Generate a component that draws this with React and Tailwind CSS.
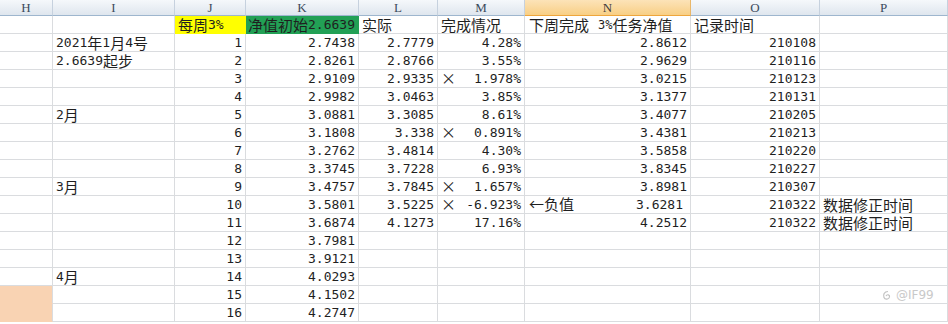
import React from "react";

const cols =
  "grid grid-cols-[53px_122px_71px_113px_79px_87px_166px_129px_128px]";
const letters = ["H", "I", "J", "K", "L", "M", "N", "O", "P"];

// rows: [I, J, K, L, M, N, O, P, markX, nNote, peach]
const rows = [
  ["2021年1月4号", "1", "2.7438", "2.7779", "4.28%", "2.8612", "210108"],
  ["2.6639起步", "2", "2.8261", "2.8766", "3.55%", "2.9629", "210116"],
  ["", "3", "2.9109", "2.9335", "1.978%", "3.0215", "210123", "", true],
  ["", "4", "2.9982", "3.0463", "3.85%", "3.1377", "210131"],
  ["2月", "5", "3.0881", "3.3085", "8.61%", "3.4077", "210205"],
  ["", "6", "3.1808", "3.338", "0.891%", "3.4381", "210213", "", true],
  ["", "7", "3.2762", "3.4814", "4.30%", "3.5858", "210220"],
  ["", "8", "3.3745", "3.7228", "6.93%", "3.8345", "210227"],
  ["3月", "9", "3.4757", "3.7845", "1.657%", "3.8981", "210307", "", true],
  ["", "10", "3.5801", "3.5225", "-6.923%", "3.6281", "210322", "数据修正时间", true, "←负值"],
  ["", "11", "3.6874", "4.1273", "17.16%", "4.2512", "210322", "数据修正时间"],
  ["", "12", "3.7981"],
  ["", "13", "3.9121"],
  ["4月", "14", "4.0293"],
  ["", "15", "4.1502", "", "", "", "", "", false, "", true],
  ["", "16", "4.2747", "", "", "", "", "", false, "", true],
];

const cjk = /([\u3000-\u9fff\uff00-\uffef×←]+)/;

// CJK runs get a wider face, the rest stays in the mono face
function T({ s }) {
  if (!s) return null;
  return s.split(cjk).map((p, i) =>
    cjk.test(p) ? (
      <span
        key={i}
        className="font-['Noto_Sans_CJK_SC',sans-serif] text-[15px] leading-[18px]"
      >
        {p}
      </span>
    ) : (
      <span key={i} className="whitespace-pre">
        {p}
      </span>
    )
  );
}

const cell =
  "h-[18px] leading-[18px] border-r border-b border-[#dadcdf] flex items-center overflow-hidden whitespace-nowrap";
const left = `${cell} pl-[3px]`;
const right = `${cell} justify-end pr-[3px]`;

function Row({ r }) {
  const [i, j, k, l, m, n, o, p, x, note, peach] = r;
  return (
    <div className={cols}>
      <div
        className={
          peach
            ? "h-[18px] bg-[#f9d3b3] border-r border-b border-r-[#dadcdf] border-b-[#f9d3b3]"
            : cell
        }
      />
      <div className={left}>
        <T s={i} />
      </div>
      <div className={right}>{j}</div>
      <div className={right}>{k}</div>
      <div className={right}>{l}</div>
      <div className={`${cell} justify-between pl-[3px] pr-[3px]`}>
        <span>{x ? <T s="×" /> : null}</span>
        <span>{m}</span>
      </div>
      <div className={`${cell} justify-between pl-[4px] pr-[3px]`}>
        <span>
          <T s={note} />
        </span>
        <span className={note ? "pr-[4px]" : ""}>{n}</span>
      </div>
      <div className={right}>{o}</div>
      <div className={left}>
        <T s={p} />
      </div>
    </div>
  );
}

export default function App() {
  return (
    <div className="relative w-[948px] h-[324px] overflow-hidden bg-white text-[13px] leading-[18px] text-[#1f1f1f] font-['DejaVu_Sans_Mono','Noto_Sans_CJK_SC',monospace]">
      {/* column letters */}
      <div className={`${cols} h-[16px]`}>
        {letters.map((c) => (
          <div
            key={c}
            className={
              c === "N"
                ? "flex items-center justify-center leading-none border-r border-b border-r-[#e9b76a] border-b-[#eea63c] bg-gradient-to-b from-[#fce3b8] to-[#f8cf85] font-['Liberation_Serif',serif] text-[13px] text-[#3c3c3c]"
                : "flex items-center justify-center leading-none border-r border-b border-r-[#c6d1de] border-b-[#9eb6ce] bg-gradient-to-b from-[#f5f8fb] to-[#dfe6ee] font-['Liberation_Serif',serif] text-[13px] text-[#3c4a5c]"
            }
          >
            {c}
          </div>
        ))}
      </div>

      {/* title row */}
      <div className={cols}>
        <div className={cell} />
        <div className={cell} />
        <div className="h-[18px] flex items-center pl-[3px] bg-[#ffff00] border-b border-[#ffff00] whitespace-nowrap">
          <T s="每周3%" />
        </div>
        <div className="h-[18px] flex items-center pl-[2px] bg-[#22a055] border-b border-[#22a055] whitespace-nowrap overflow-hidden">
          <T s="净值初始2.6639" />
        </div>
        <div className={left}>
          <T s="实际" />
        </div>
        <div className={left}>
          <T s="完成情况" />
        </div>
        <div className={`${left} pl-[4px]`}>
          <T s="下周完成" />
          <span className="ml-[9px] text-[12px]">3%</span>
          <T s="任务净值" />
        </div>
        <div className={left}>
          <T s="记录时间" />
        </div>
        <div className={cell} />
      </div>

      {rows.map((r, idx) => (
        <Row key={idx} r={r} />
      ))}

      {/* watermark */}
      <div className="absolute left-[881px] top-[289px] flex items-center gap-[4px] text-[12px] leading-none text-[#c9c9c9] font-['DejaVu_Sans',sans-serif]">
        <svg width="11" height="12" viewBox="0 0 11 12" fill="none" stroke="#c2c2c2" strokeWidth="1.2">
          <path d="M7 2.5 C3 2.5 2 6 3 8.5 C4 11 8 10.5 8.5 8 C9 5.5 6 5 5 7" />
        </svg>
        <span>@IF99</span>
      </div>
    </div>
  );
}
